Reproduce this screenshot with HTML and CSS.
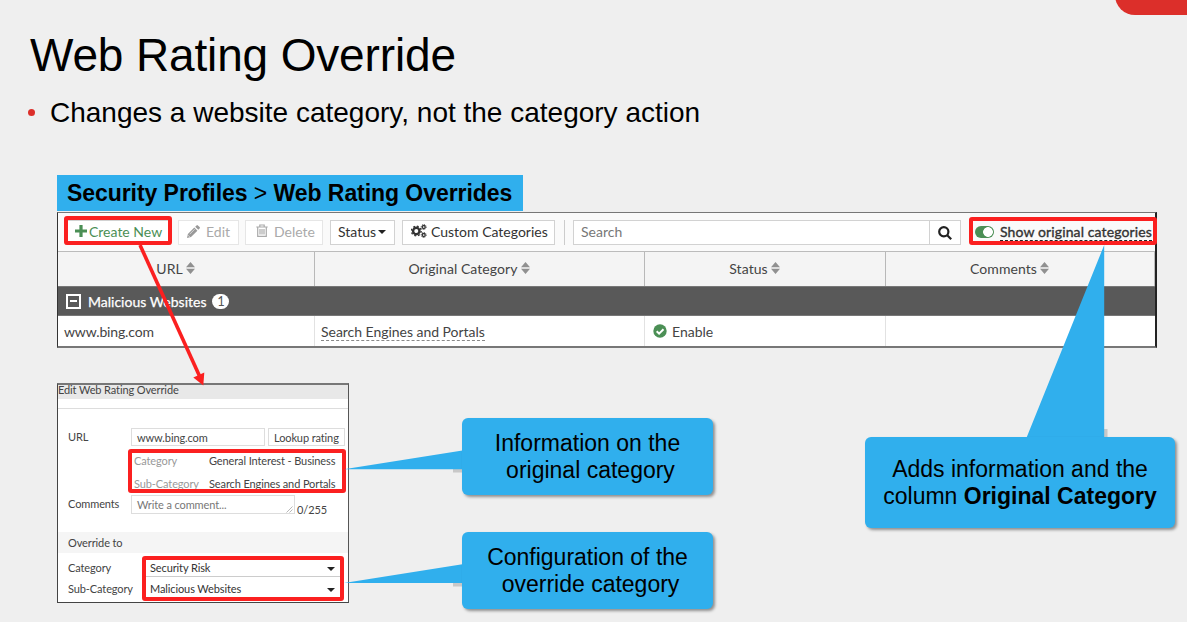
FILE: index.html
```html
<!DOCTYPE html>
<html lang="en">
<head>
<meta charset="utf-8">
<title>Web Rating Override</title>
<link rel="stylesheet" href="styles.css">
</head>
<body>
<main class="slide">
  <div class="corner"></div>
  <h1 class="title"><span>Web Rating Override</span></h1>
  <ul class="points"><li><span>Changes a website category, not the category action</span></li></ul>

  <div class="crumb"><span><b>Security Profiles</b> &gt; <b>Web Rating Overrides</b></span></div>

  <section class="panel">
    <div class="toolbar">
      <div class="btn create"><svg class="plus" viewBox="0 0 12 12"><path d="M4.4 0h3.2v4.4H12v3.2H7.600V12H4.400V7.600H0V4.400h4.400z"/></svg><span>Create New</span></div>
      <div class="btn edit off"><svg class="pencil" viewBox="0 0 13 13"><path d="M0 13l.9-4L7.300 2.600l3.100 3.100L4 12.100zM8.200 1.700L9.500.4q.7-.7 1.400 0l1.700 1.700q.7.700 0 1.400l-1.300 1.300z"/><path class="cut" d="M2.700 9.200l5-5M1 10.200l1.800 1.800"/></svg><span>Edit</span></div>
      <div class="btn delete off"><svg class="trash" viewBox="0 0 12 13"><path d="M.3 3h11.400M3.800 3V1h4.400v2M1.700 3.200v9.200h8.600V3.200M4 5v5.500M6 5v5.500M8 5v5.500"/></svg><span>Delete</span></div>
      <div class="btn status"><span>Status</span><i class="caret"></i></div>
      <div class="btn custom"><svg class="gears" viewBox="0 0 16 14"><circle cx="5.300" cy="7" r="3.200" stroke-width="2.400"/><circle cx="5.300" cy="7" r="4.900" stroke-width="1.300" stroke-dasharray="1.900 1.950"/><circle cx="12.700" cy="3" r="1.500" stroke-width="1.300"/><circle cx="12.700" cy="3" r="2.500" stroke-width=".9" stroke-dasharray="1 .96"/><circle cx="12.700" cy="11" r="1.500" stroke-width="1.300"/><circle cx="12.700" cy="11" r="2.500" stroke-width=".9" stroke-dasharray="1 .96"/></svg><span>Custom Categories</span></div>
      <div class="divider"></div>
      <div class="search"><span class="field">Search</span><span class="go"><svg viewBox="0 0 14 14"><circle cx="5.800" cy="5.800" r="4.600"/><path d="M9.200 9.200l4 4"/></svg></span></div>
      <div class="toggle"><i class="switch"></i><span class="dash">Show original categories</span></div>
    </div>
    <div class="grid head">
      <div><span>URL</span><svg class="sort" viewBox="0 0 9 12"><path d="M4.500 0L9 5.300H0zM0 6.700h9L4.500 12z"/></svg></div>
      <div><span>Original Category</span><svg class="sort" viewBox="0 0 9 12"><path d="M4.500 0L9 5.300H0zM0 6.700h9L4.500 12z"/></svg></div>
      <div><span>Status</span><svg class="sort" viewBox="0 0 9 12"><path d="M4.500 0L9 5.300H0zM0 6.700h9L4.500 12z"/></svg></div>
      <div><span>Comments</span><svg class="sort" viewBox="0 0 9 12"><path d="M4.500 0L9 5.300H0zM0 6.700h9L4.500 12z"/></svg></div>
    </div>
    <div class="group"><i class="minus"></i><span>Malicious Websites</span><span class="count">1</span></div>
    <div class="grid row">
      <div><span class="site">www.bing.com</span></div>
      <div><span class="dash">Search Engines and Portals</span></div>
      <div><svg class="check" viewBox="0 0 14 14"><circle cx="7" cy="7" r="6.700"/><path d="M3.700 7.200l2.400 2.400 4.400-4.400"/></svg><span>Enable</span></div>
      <div></div>
    </div>
  </section>

  <section class="dialog">
    <div class="dtitle"><span>Edit Web Rating Override</span></div>
    <div class="drule"></div>
    <div class="frow url"><label>URL</label><span class="input">www.bing.com</span><span class="lookup">Lookup rating</span></div>
    <div class="frow info"><span class="key">Category</span><span class="val">General Interest - Business</span></div>
    <div class="frow info second"><span class="key">Sub-Category</span><span class="val">Search Engines and Portals</span></div>
    <div class="frow com"><label>Comments</label><span class="area">Write a comment...<svg viewBox="0 0 7 7"><path d="M.5 6.500l6-6M3.500 6.500l3-3"/></svg></span><span class="len">0/255</span></div>
    <div class="strip">Override to</div>
    <div class="frow sel"><label>Category</label><span class="select">Security Risk<i class="caret"></i></span></div>
    <div class="frow sel last"><label>Sub-Category</label><span class="select">Malicious Websites<i class="caret"></i></span></div>
  </section>

  <div class="mark m-create"></div>
  <div class="mark m-toggle"></div>
  <div class="mark m-info"></div>
  <div class="mark m-over"></div>
  <svg class="overlay" viewBox="0 0 1187 622">
    <path class="arrow-line" d="M140 245L199.500 376"/>
    <path class="arrow-head" d="M193.300 377.500L204.300 372.500L203.300 385.500z"/>
    <path class="tail-shade" d="M453 469h12v3.500h-12zM453 583h10v3.500h-10zM1104 429h3.500v9h-3.500z"/>
    <path class="tail" d="M344 469.200L464 450.200V469.200zM344 583L464 564V583zM1104.200 245V439H1026z"/>
  </svg>
  <div class="callout c-info"><span>Information on the</span><span class="shift">original category</span></div>
  <div class="callout c-over"><span>Configuration of the</span><span class="shift">override category</span></div>
  <div class="callout c-adds"><span>Adds information and the</span><span>column <b>Original Category</b></span></div>
</main>
</body>
</html>
```
FILE: styles.css
```css
* { box-sizing: border-box; }
body { margin: 0; background: #efefef; }
.slide {
  position: relative;
  width: 1187px;
  height: 622px;
  overflow: hidden;
  background: #efefef;
  color: #000;
  font-family: "Liberation Sans", Arial, sans-serif;
  white-space: nowrap;
}
svg { display: block; flex: none; }
.corner {
  position: absolute;
  top: -25px;
  left: 1115px;
  width: 100px;
  height: 40px;
  border-radius: 20px;
  background: #dc2f2a;
}
.title { margin: 0; padding: 28px 0 0 30px; font-size: 46px; font-weight: 400; line-height: 54px; letter-spacing: -.15px; }
.points { margin: 0; padding: 14px 0 0 50px; list-style: none; font-size: 28px; line-height: 34px; }
.points li::before {
  content: "";
  float: left;
  width: 7px;
  height: 7px;
  margin: 13px 0 0 -22px;
  border-radius: 50%;
  background: #dc2f2a;
}
.crumb {
  width: 466px;
  height: 36px;
  margin: 45px 0 0 57px;
  padding-left: 10px;
  background: #30afed;
  font-size: 23px;
  line-height: 37px;
  letter-spacing: -.06px;
}

/* Rating override list */
.panel {
  width: 1100px;
  height: 136px;
  margin: 1px 0 0 57px;
  border: 2px solid #777;
  border-left: 1px solid #333;
  border-right: 2px solid #222;
  border-top-width: 1px;
  background: #fff;
  color: #444;
  font-family: Lato, sans-serif;
  font-size: 14px;
}
.toolbar { display: flex; height: 38px; padding: 7px 0 0 7px; background: #fafafa; }
.btn {
  display: flex;
  flex: none;
  align-items: center;
  height: 25px;
  margin-right: 7px;
  padding-bottom: 2px;
  border: 1px solid #d2d2d2;
  background: #fff;
  color: #333;
}
.btn.off { border-color: #e6e6e6; color: #aaa; }
.create { width: 106px; padding-left: 9px; color: #4b8f55; }
.plus { width: 12px; height: 12px; margin: -2px 2px 0 0; fill: #4b8f55; }
.edit { width: 61px; padding-left: 8px; margin-right: 6px; }
.pencil { width: 13px; height: 13px; margin: -1px 6px 0 0; fill: #999; }
.cut { fill: none; stroke: #fff; stroke-width: .6; }
.delete { width: 78px; padding-left: 10px; }
.trash { width: 12px; height: 13px; margin: -2px 6px 0 0; fill: none; stroke: #aaa; stroke-width: 1.2; }
.status { width: 65px; padding-left: 7px; }
.caret { border: 4px solid transparent; border-top-color: #222; border-bottom: 0; }
.status .caret { margin: 0 0 0 2px; }
.custom { width: 153px; padding-left: 8px; }
.gears { width: 16px; height: 14px; margin: -1px 4px 0 0; fill: none; stroke: #333; }
.divider { flex: none; width: 1px; height: 25px; margin: 0 8px 0 2px; background: #ccc; }
.search { display: flex; flex: none; width: 388px; height: 25px; border: 1px solid #d2d2d2; background: #fff; }
.field { width: 356px; padding-left: 7px; border-right: 1px solid #d2d2d2; color: #777; line-height: 22px; }
.go svg { width: 14px; height: 14px; margin: 5px 0 0 8px; fill: none; stroke: #222; stroke-width: 2.2; }
.toggle { display: flex; flex: none; height: 25px; padding-left: 14px; color: #333; line-height: 24px; }
.switch { width: 19px; height: 12px; margin: 6px 6px 0 0; border-radius: 6px; background: radial-gradient(circle at 13px 6px, #fff 4.500px, #4b8f55 5.200px); }
.dash { height: 20px; border-bottom: 1px dashed #666; }
.toggle .dash { height: 21px; border-color: #222; letter-spacing: .12px; -webkit-text-stroke: .35px #333; }
.grid { display: grid; grid-template-columns: 257px 330px 241px 1fr; }
.grid > div { display: flex; align-items: center; }
.head { height: 35px; border-top: 1px solid #bbb; border-right: 1px solid #bbb; background: #f4f4f4; letter-spacing: .07px; }
.head > div { justify-content: center; padding: 0 21px 2px 0; border-right: 1px solid #b8b8b8; }
.head > div:last-child { border: 0; }
.sort { width: 9px; height: 12px; margin: 0 0 0 3px; fill: #909090; }
.group { display: flex; align-items: center; height: 30px; padding-left: 8px; border-top: 1px solid #777; border-bottom: 1px solid #777; background: #595959; color: #fff; -webkit-text-stroke: .25px #fff; }
.minus { width: 15px; height: 15px; margin-right: 7px; border: 2px solid #fff; background: linear-gradient(#fff, #fff) center / 7px 2px no-repeat; }
.count { width: 17px; height: 15px; margin-left: 6px; border-radius: 8px; background: #fff; color: #555; font-size: 13px; line-height: 15px; text-align: center; -webkit-text-stroke: 0; }
.row { height: 30px; }
.row > div { padding: 0 0 0 6px; border-right: 1px solid #e2e2e2; }
.site { letter-spacing: -.15px; }
.row .dash { height: 18px; margin-top: 2px; border-color: #888; line-height: 17px; letter-spacing: -.03px; }
.row > div:last-child { border: 0; }
.check { width: 14px; height: 14px; margin: 0 5px 0 2px; fill: #4b8f55; }
.check path { fill: none; stroke: #fff; stroke-width: 2; }

/* Edit dialog */
.dialog {
  width: 292px;
  height: 220px;
  margin: 35px 0 0 57px;
  border: 1px solid #444;
  border-top: 2px solid #777;
  border-right: 1px solid #555;
  background: #fff;
  color: #444;
  font-family: Lato, sans-serif;
  font-size: 11px;
  letter-spacing: -.11px;
}
.dtitle { height: 14px; background: #e8e8e8; line-height: 10px; }
.drule { height: 10px; border-bottom: 1px solid #ddd; }
.frow { display: flex; }
.frow label { width: 63px; line-height: 18px; }
.url { padding: 19px 0 0 10px; }
.input, .lookup { height: 18px; border: 1px solid #ddd; padding-left: 5px; line-height: 17px; }
.input { width: 134px; margin-right: 3px; }
.lookup { width: 77px; }
.info { height: 23px; padding: 7px 0 0 76px; line-height: 16px; }
.info.second { height: 26px; }
.key { width: 75px; color: #999; }
.com { padding-left: 10px; }
.area { display: flex; justify-content: space-between; width: 164px; height: 19px; padding-left: 5px; border: 1px solid #ddd; color: #777; line-height: 18px; }
.area svg { width: 7px; height: 7px; margin: 10px 1px 0 0; stroke: #999; stroke-width: .7; fill: none; }
.len { margin-left: 2px; line-height: 30px; height: 19px; }
.strip { height: 21px; margin: 18px 0 7px; padding-left: 10px; background: #f5f5f5; line-height: 22px; }
.sel { padding-left: 10px; height: 21px; }
.sel label { width: 77px; line-height: 15px; }
.select { display: flex; justify-content: space-between; width: 195px; height: 17px; padding: 0 5px; border-bottom: 1px solid #ccc; line-height: 16px; color: #333; }
.select .caret { margin-top: 7px; }

/* Annotations */
.mark { position: absolute; border: 4px solid #fb2020; border-radius: 3px; }
.m-create { left: 64px; top: 216px; width: 108px; height: 29px; }
.m-toggle { left: 969px; top: 217px; width: 188px; height: 28px; }
.m-info { left: 128px; top: 449px; width: 218px; height: 44px; }
.m-over { left: 142px; top: 556px; width: 202px; height: 45px; }
.overlay { position: absolute; left: 0; top: 0; width: 1187px; height: 622px; }
.arrow-line { stroke: #fb2020; stroke-width: 3.6; }
.arrow-head { fill: #fb2020; }
.tail { fill: #30afed; }
.tail-shade { fill: #c8c8c8; }
.callout {
  position: absolute;
  display: flex;
  flex-direction: column;
  align-items: center;
  justify-content: center;
  border-radius: 6px;
  background: #30afed;
  box-shadow: 2px 2px 3px rgba(0, 0, 0, .4);
  font-size: 23px;
  line-height: 27px;
}
.c-info { left: 462px; top: 418px; width: 251px; height: 77px; }
.c-over { left: 462px; top: 532px; width: 251px; height: 77px; }
.c-over .shift { line-height: 26px; }
.c-adds { left: 865px; top: 437px; width: 310px; height: 91px; }
.shift { padding-left: 6px; }
```
